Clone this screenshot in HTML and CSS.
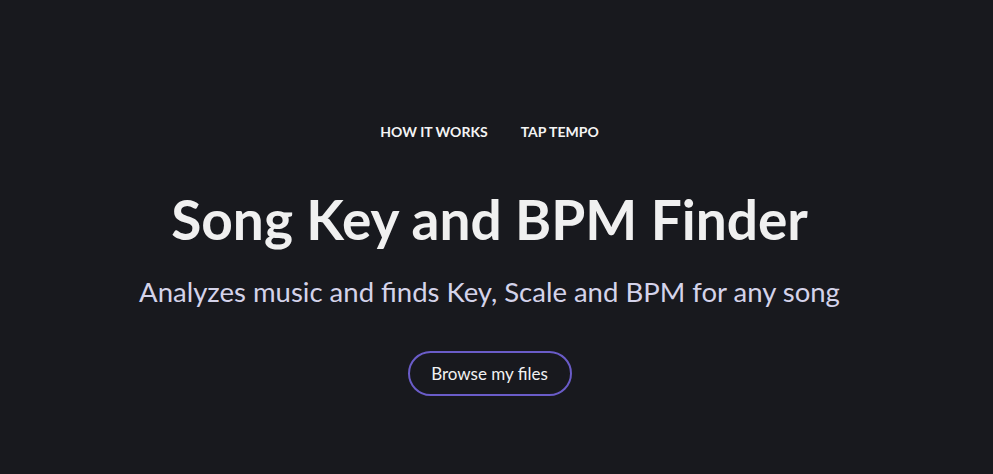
FILE: index.html
```html
<!DOCTYPE html>
<html lang="en">
<head>
    <meta charset="UTF-8">
    <meta name="viewport" content="width=device-width, initial-scale=1.0">
    <title>Song Key and BPM Finder</title>
    <link rel="stylesheet" href="styles.css">
</head>
<body>
    <div class="hero">
        <!-- Top navigation -->
        <nav class="nav">
            <a href="#how">HOW IT WORKS</a>
            <a href="#tap">TAP TEMPO</a>
        </nav>

        <h1>Song Key and BPM Finder</h1>
        <p class="subtitle">Analyzes music and finds Key, Scale and BPM for any song</p>

        <button class="browse">Browse my files</button>
    </div>
</body>
</html>
```

FILE: styles.css
```css
/* Basic styling */
body {
    font-family: Lato, "Open Sans", sans-serif;
    margin: 0;
    padding: 0;
    background-color: #18191e;
    color: #f2f2f2;
}

.hero {
    display: flex;
    flex-direction: column;
    align-items: center;
    padding: 122px 14px 0 0;
}

.nav {
    display: flex;
    gap: 33px;
}

.nav a {
    color: #f4f4f4;
    text-decoration: none;
    font-size: 14px;
    font-weight: bold;
    line-height: 20px;
}

h1 {
    font-size: 55px;
    font-weight: bold;
    color: #f0f0f0;
    margin: 42px 0 0;
    line-height: 70px;
}

.subtitle {
    font-size: 27.5px;
    color: #d4d3ea;
    margin: 20px 0 0;
    line-height: 36px;
}

.browse {
    margin-top: 41px;
    width: 164px;
    height: 45px;
    border: 2px solid #6a5cc8;
    border-radius: 23px;
    background: transparent;
    color: #f2f2f2;
    font-family: inherit;
    font-size: 17px;
    cursor: pointer;
}
```
